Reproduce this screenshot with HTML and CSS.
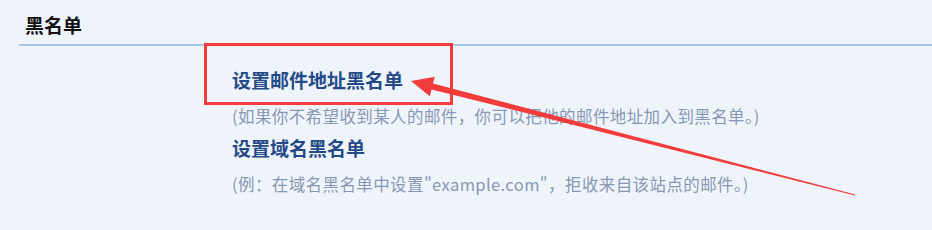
FILE: index.html
```html
<!DOCTYPE html>
<html lang="zh-CN">
<head>
    <meta charset="UTF-8">
    <title>黑名单</title>
    <link rel="stylesheet" href="styles.css">
</head>
<body>
    <div class="header">
        <h1>黑名单</h1>
    </div>
    <div class="list">
        <a class="item-title first" href="#">设置邮件地址黑名单</a>
        <p class="item-desc">(如果你不希望收到某人的邮件，你可以把他的邮件地址加入到黑名单。)</p>
        <a class="item-title" href="#">设置域名黑名单</a>
        <p class="item-desc">(例：在域名黑名单中设置"example.com"，拒收来自该站点的邮件。)</p>
    </div>

    <!-- annotation -->
    <div class="mark-box"></div>
    <svg class="mark-arrow" width="932" height="230" viewBox="0 0 932 230">
        <polygon fill="#f23b3b" points="411,81 434.8,76.8 433,83.6 855.1,194.5 854.9,195.5 431.5,89.4 429.8,96.2"/>
    </svg>
</body>
</html>
```

FILE: styles.css
```css
body {
    margin: 0;
    background-color: #eff4fb;
    font-family: "Noto Sans CJK SC", "Noto Sans", sans-serif;
    width: 932px;
    height: 230px;
    overflow: hidden;
}

.header {
    margin-left: 19px;
    padding-left: 6px;
    height: 44px;
    border-bottom: 2px solid #a9c7ea;
}

.header h1 {
    margin: 0;
    font-size: 19px;
    line-height: 50px;
    font-weight: bold;
    color: #111;
}

.list {
    padding-left: 232px;
}

.item-title {
    display: block;
    font-size: 19px;
    line-height: 32px;
    font-weight: bold;
    color: #234a86;
    text-decoration: none;
}

.item-title.first {
    margin-top: 18px;
}

.item-desc {
    margin: 4px 0 0 0;
    font-size: 16.5px;
    letter-spacing: 0.4px;
    line-height: 32px;
    color: #8797b3;
}

/* red highlight over the first link */
.mark-box {
    position: absolute;
    left: 204px;
    top: 43px;
    width: 243px;
    height: 56px;
    border: 3px solid #f23b3b;
}

.mark-arrow {
    position: absolute;
    left: 0;
    top: 0;
}
```
